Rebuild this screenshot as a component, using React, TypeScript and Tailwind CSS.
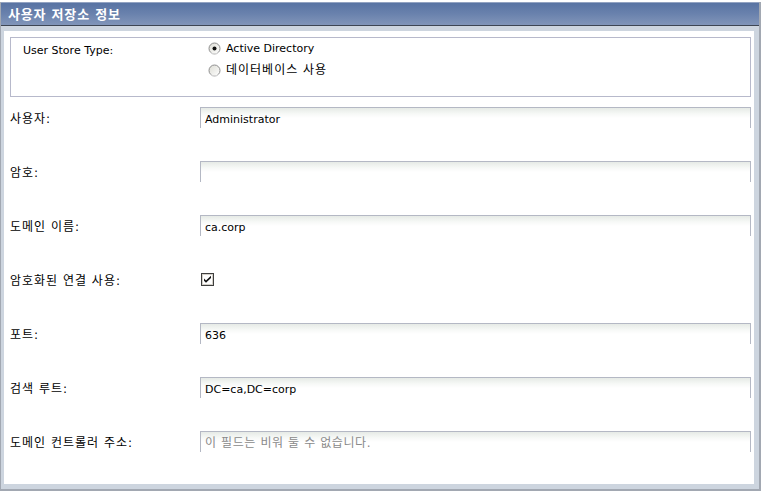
import React from "react";

const FONT = "font-['DejaVu_Sans','Noto_Sans_CJK_KR',sans-serif]";

function Radio({ checked }: { checked?: boolean }) {
  return (
    <svg width="13" height="13" viewBox="0 0 13 13" className="shrink-0">
      <defs>
        <linearGradient id={checked ? "rg1" : "rg2"} x1="0" y1="0" x2="1" y2="1">
          <stop offset="0" stopColor="#dcdcd4" />
          <stop offset="1" stopColor="#ffffff" />
        </linearGradient>
      </defs>
      <circle cx="6.5" cy="6.5" r="5.5" fill={`url(#${checked ? "rg1" : "rg2"})`} stroke="#8e8e8e" strokeWidth="1" />
      <path d="M2.6 10.4 A5.5 5.5 0 0 0 10.4 10.4" fill="none" stroke="#e8e8e8" strokeWidth="1" />
      {checked && <circle cx="6.5" cy="6.5" r="2" fill="#111" />}
    </svg>
  );
}

function Checkbox() {
  return (
    <svg width="13" height="13" viewBox="0 0 13 13" className="shrink-0">
      <rect x="0.5" y="0.5" width="12" height="12" fill="#fff" stroke="#3e3e3e" />
      <rect x="1.5" y="1.5" width="10" height="10" fill="none" stroke="#d4d0c8" />
      <path d="M3 5.6 L5 7.6 L10 2.8 L10 5 L5 9.8 L3 7.8 Z" fill="#111" />
    </svg>
  );
}

function TextBox({ value, placeholder }: { value?: string; placeholder?: string }) {
  return (
    <div className="w-[551px] h-[21px] border-t border-l border-r border-[#b4b8c4] bg-[linear-gradient(to_bottom,#e6eae6_0px,#f7f9f7_6px,#ffffff_10px)] flex items-center pl-[4px] pt-[2px]">
      {value ? (
        <span className="text-[11px] text-black leading-none">{value}</span>
      ) : placeholder ? (
        <span className="text-[12px] text-[#8a8a8a] leading-none tracking-[0.6px]">{placeholder}</span>
      ) : null}
    </div>
  );
}

function Row({ label, children }: { label: string; children: React.ReactNode }) {
  return (
    <div className="flex items-center h-[21px]">
      <div className="w-[190px] text-[12px] text-black leading-none pt-[2px] tracking-[1px]">{label}</div>
      {children}
    </div>
  );
}

export default function App() {
  return (
    <div className={`w-[761px] h-[491px] bg-white pt-[2px] ${FONT}`}>
      <div className="w-[761px] h-[489px] flex flex-col border-l border-r-2 border-b-2 border-[#a2a8b2]">
        <div className="h-[24px] shrink-0 border-t border-[#93a3c2] border-b border-b-[#3e4654] bg-[linear-gradient(to_bottom,#5873a3_0%,#6a82ad_50%,#8195b9_100%)] flex items-center pl-[7px]">
          <span className="text-white font-bold text-[13px] leading-none tracking-[0.8px]">사용자 저장소 정보</span>
        </div>
        <div className="flex-1 bg-[#cdd5df] pl-[3px] pr-[5px] pt-[5px] pb-[5px] flex">
          <div className="flex-1 bg-white pl-[6px] pr-[2px] pt-[6px] flex flex-col">
            <div className="w-[741px] h-[60px] border border-[#b7b9cb] flex pt-[3px]">
              <div className="w-[197px] pl-[12px] text-[11px] text-black leading-none pt-[4px]">User Store Type:</div>
              <div className="flex flex-col gap-[8px]">
                <div className="flex items-center gap-[5px] h-[14px]">
                  <Radio checked />
                  <span className="text-[11px] text-black leading-none">Active Directory</span>
                </div>
                <div className="flex items-center gap-[5px] h-[14px]">
                  <Radio />
                  <span className="text-[12px] text-black leading-none tracking-[1px]">데이터베이스 사용</span>
                </div>
              </div>
            </div>
            <div className="flex flex-col gap-[33px] mt-[10px]">
              <Row label="사용자:">
                <TextBox value="Administrator" />
              </Row>
              <Row label="암호:">
                <TextBox />
              </Row>
              <Row label="도메인 이름:">
                <TextBox value="ca.corp" />
              </Row>
              <Row label="암호화된 연결 사용:">
                <div className="pl-[1px]">
                  <Checkbox />
                </div>
              </Row>
              <Row label="포트:">
                <TextBox value="636" />
              </Row>
              <Row label="검색 루트:">
                <TextBox value="DC=ca,DC=corp" />
              </Row>
              <Row label="도메인 컨트롤러 주소:">
                <TextBox placeholder="이 필드는 비워 둘 수 없습니다." />
              </Row>
            </div>
          </div>
        </div>
      </div>
    </div>
  );
}
